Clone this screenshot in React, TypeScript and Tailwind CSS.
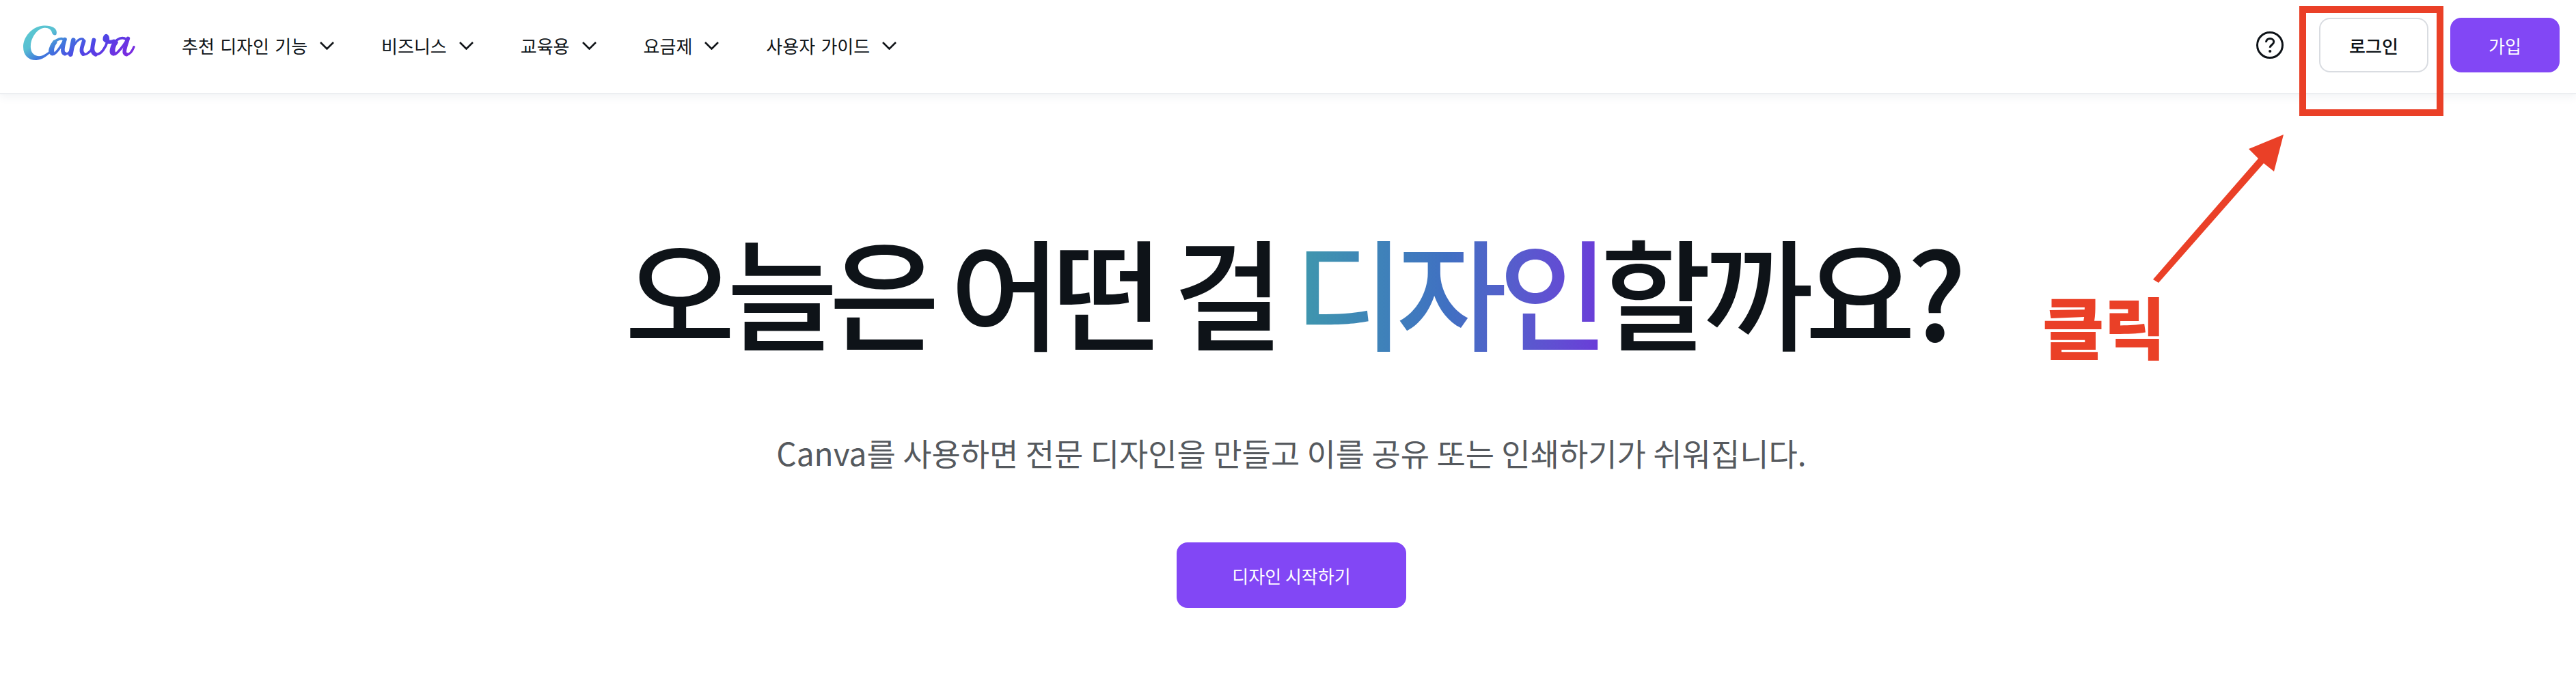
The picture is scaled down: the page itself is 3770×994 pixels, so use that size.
const font = { fontFamily: '"Noto Sans CJK KR", "Noto Sans", sans-serif' };

function Chevron() {
  return (
    <svg width="23" height="13" viewBox="0 0 23 13" className="ml-[17px] shrink-0" fill="none">
      <path d="M2 2l9.5 9.5L21 2" stroke="#111519" strokeWidth="2.6" />
    </svg>
  );
}

function Logo({ id, className, w, h }: { id: string; className: string; w: number; h: number }) {
  return (
    <svg width={w} height={h} viewBox="0 0 600 267" className={className} fill="none">
      <defs>
        <linearGradient id={id} gradientUnits="userSpaceOnUse" x1="60" y1="20" x2="260" y2="320">
          <stop offset="0" stopColor="#5ccbd0" />
          <stop offset="0.26" stopColor="#58bfd2" />
          <stop offset="0.43" stopColor="#4079dc" />
          <stop offset="0.66" stopColor="#4f45e6" />
          <stop offset="1" stopColor="#7a2ae0" />
        </linearGradient>
      </defs>
      <path
        fill={`url(#${id})`}
        d="M188 68C195 40 160 28 125 32C80 38 42 80 42 125C42 165 70 185 100 183C125 181 150 165 170 140L165 135C145 155 125 168 105 165C85 162 72 145 75 115C78 85 100 48 130 42C150 38 165 48 168 62C170 72 186 78 188 68Z"
      />
      <g stroke={`url(#${id})`} strokeLinecap="round" strokeLinejoin="round">
        <path strokeWidth="11" d="M225 95C205 78 170 100 160 135C155 155 170 165 185 150C200 135 215 110 225 90" />
        <path strokeWidth="20" d="M180 105C168 120 164 140 170 152" />
        <path strokeWidth="17" d="M225 92C218 115 208 150 225 155" />
        <path strokeWidth="10" d="M225 155C240 160 255 140 262 115" />
        <path strokeWidth="20" d="M262 95L250 158" />
        <path strokeWidth="10" d="M255 135C268 110 285 88 300 90C315 92 305 115 300 130C293 150 305 165 322 155C340 145 350 125 352 100" />
        <path strokeWidth="17" d="M308 100C300 125 292 145 305 156" />
        <path strokeWidth="18" d="M352 95C345 125 340 150 360 158" />
        <path strokeWidth="11" d="M360 158C385 160 405 125 412 100" />
        <path strokeWidth="16" d="M412 100C415 80 405 68 400 85C396 100 420 108 440 100" />
        <path strokeWidth="11" d="M495 92C470 75 435 100 428 135C423 158 440 165 455 150C470 135 490 110 500 88" />
        <path strokeWidth="20" d="M448 105C436 120 432 140 438 152" />
        <path strokeWidth="17" d="M502 88C490 125 478 155 495 158" />
        <path strokeWidth="10" d="M495 158C510 160 522 140 528 125" />
      </g>
    </svg>
  );
}

export default function App() {
  return (
    <div className="relative h-[994px] w-[3770px] overflow-hidden bg-white" style={font}>
      <header className="relative flex h-[138px] items-center border-b-2 border-[#eceef1] bg-white pb-[4px] pl-[266px] pr-[24px] shadow-[0_4px_12px_rgba(64,87,109,0.07)]">
        <Logo id="cv" w={200} h={89} className="absolute left-[20px] top-[27px]" />
        <nav className="flex items-center gap-[68px] text-[26px] font-normal text-[#0e1318] [word-spacing:2.5px]">
          {["추천 디자인 기능", "비즈니스", "교육용", "요금제", "사용자 가이드"].map((t) => (
            <div key={t} className="flex items-center">
              <span>{t}</span>
              <Chevron />
            </div>
          ))}
        </nav>
        <div className="ml-auto flex items-center">
          <svg width="40" height="40" viewBox="0 0 40 40" fill="none" className="mr-[52px]">
            <circle cx="20" cy="20" r="18.5" stroke="#0e1318" strokeWidth="3" />
            <path d="M14.5 16c0-3.5 2.6-5.5 5.7-5.5 3.1 0 5.5 2 5.5 4.8 0 4.2-5.5 4.2-5.5 8.5" stroke="#0e1318" strokeWidth="3" />
            <circle cx="20.2" cy="29" r="2.1" fill="#0e1318" />
          </svg>
          <button className="flex h-[80px] w-[160px] items-center justify-center rounded-[16px] border-2 border-[#d9dce1] bg-white text-[26px] font-medium text-[#0e1318]">
            로그인
          </button>
          <button className="ml-[32px] flex h-[80px] w-[160px] items-center justify-center rounded-[16px] bg-[#8247f5] text-[26px] font-normal text-white">
            가입
          </button>
        </div>
      </header>

      <main className="flex flex-col items-center pl-[10px]">
        <h1 className="mt-[186px] whitespace-nowrap text-[176px] font-medium leading-[200px] tracking-[-0.07em] text-[#0e1318]">
          오늘은 어떤 걸{" "}
          <span className="bg-gradient-to-r from-[#3f98ac] via-[#4070c2] to-[#6a3bd9] bg-clip-text text-transparent">디자인</span>
          할까요?
        </h1>
        <p className="mt-[106px] text-[46px] font-normal leading-[64px] text-[#55595e]">
          Canva를 사용하면 전문 디자인을 만들고 이를 공유 또는 인쇄하기가 쉬워집니다.
        </p>
        <button className="mt-[100px] flex h-[96px] w-[336px] items-center justify-center rounded-[16px] bg-[#8247f5] text-[26px] font-normal text-white">
          디자인 시작하기
        </button>
      </main>

      {/* annotation overlay */}
      <div className="absolute left-[3365px] top-[9px] h-[161px] w-[211px] border-[10px] border-[#ea4027]" />
      <svg width="3770" height="994" className="pointer-events-none absolute left-0 top-0">
        <polygon points="3151,409 3159,414 3313,239 3328,251 3342,197 3291,218 3305,232" fill="#ea4027" />
      </svg>
      <div className="absolute left-[2989px] top-[415px] text-[98px] font-black leading-[120px] text-[#ea4027]">클릭</div>
    </div>
  );
}
